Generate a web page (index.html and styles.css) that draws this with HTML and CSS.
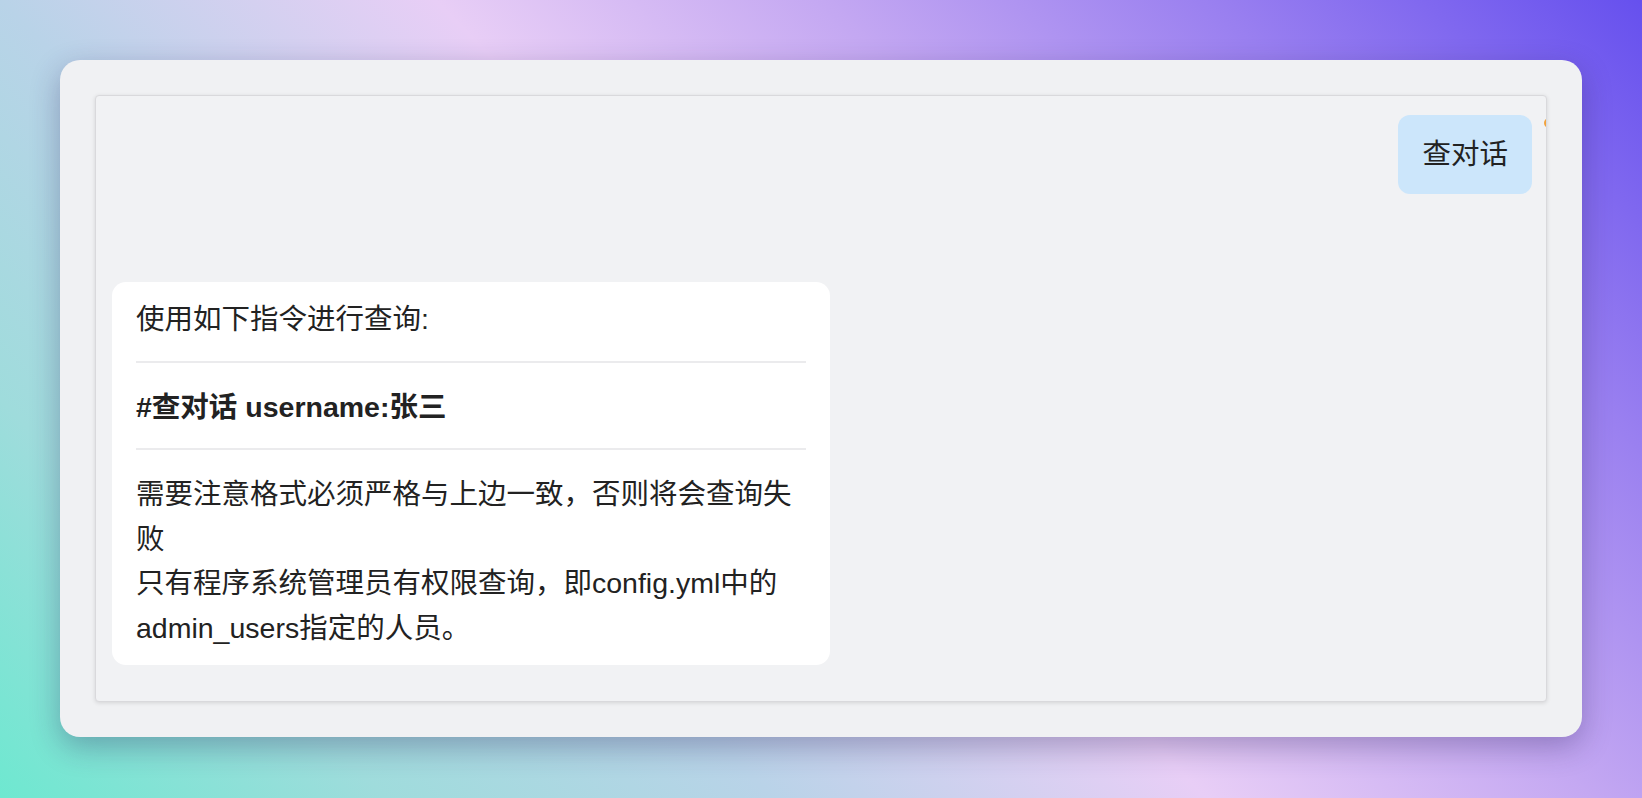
FILE: index.html
```html
<!DOCTYPE html>
<html lang="zh-CN">
<head>
<meta charset="utf-8">
<title>查对话</title>
<link rel="stylesheet" href="styles.css">
</head>
<body>
<div class="stage">
  <div class="card">
    <div class="chat">
      <div class="row row-user">
        <div class="bubble bubble-user">查对话</div>
        <span class="avatar"></span>
      </div>
      <div class="row row-bot">
        <div class="bubble bubble-bot">
          <p>使用如下指令进行查询:</p>
          <hr>
          <p><strong>#查对话 username:张三</strong></p>
          <hr>
          <p>需要注意格式必须严格与上边一致，否则将会查询失败<br>只有程序系统管理员有权限查询，即config.yml中的admin_users指定的人员。</p>
        </div>
      </div>
    </div>
  </div>
</div>
</body>
</html>
```
FILE: styles.css
```css
html, body {
  margin: 0;
  padding: 0;
}
body {
  width: 1642px;
  height: 798px;
  overflow: hidden;
  font-family: "Liberation Sans", "Noto Sans CJK SC", sans-serif;
  color: #222;
  background: linear-gradient(46deg, #6ee8d0 0%, #9fdcdc 16%, #b9d3e8 32%, #e8cef6 50%, #c4a8f2 66%, #9a80f0 82%, #6650ee 100%);
}
.stage {
  padding: 60px;
}
.card {
  width: 1522px;
  height: 677px;
  box-sizing: border-box;
  padding: 35px;
  background: #f0f1f3;
  border-radius: 20px;
  box-shadow: 0 10px 30px rgba(40, 30, 90, 0.32);
}
.chat {
  box-sizing: border-box;
  height: 607px;
  padding: 19px 0 36px 16px;
  background: #f1f2f4;
  border: 1px solid #d9d9dc;
  border-radius: 4px;
  box-shadow: 0 1px 4px rgba(0, 0, 0, 0.12);
  overflow: hidden;
  display: flex;
  flex-direction: column;
  gap: 88px;
}
.row {
  display: flex;
  align-items: flex-start;
}
.row-user {
  justify-content: flex-end;
}
.bubble {
  font-size: 28.5px;
}
.bubble-user {
  background: #cce6fb;
  border-radius: 12px;
  padding: 17px 24px;
  line-height: 45px;
  margin-right: 12px;
}
.avatar {
  flex-shrink: 0;
  width: 10px;
  height: 10px;
  margin-top: 3px;
  margin-right: -8px;
  border-radius: 50%;
  background: #f2a23c;
}
.bubble-bot {
  background: #fff;
  border-radius: 14px;
  width: 718px;
  box-sizing: border-box;
  padding: 15px 24px 15px;
  line-height: 44.5px;
}
.bubble-bot p {
  margin: 0;
}
.bubble-bot strong {
  font-weight: 600;
}
.bubble-bot hr {
  border: 0;
  height: 2px;
  background: #ebebed;
  margin: 19px 0 22px;
}
```
